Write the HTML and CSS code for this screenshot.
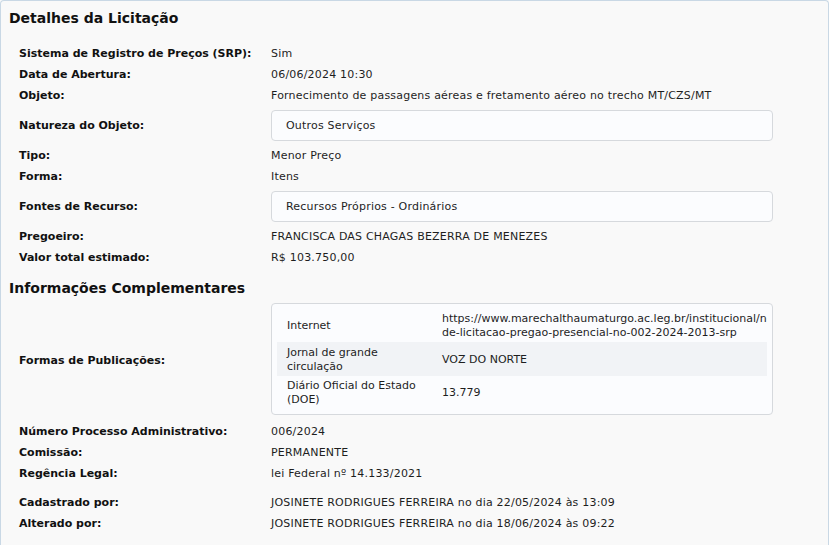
FILE: index.html
```html
<!DOCTYPE html>
<html lang="pt-BR">
<head>
	<meta charset="UTF-8">
	<meta name="viewport" content="width=device-width, initial-scale=1.0">
	<title>Detalhes da Licitação</title>
	<link rel="stylesheet" href="styles.css">
</head>
<body>

	<div class="panel">
		<h3 class="sectionTitle first">Detalhes da Licitação</h3>

		<div class="fields">
			<div class="field"><span class="label">Sistema de Registro de Preços (SRP):</span><span class="value">Sim</span></div>
			<div class="field"><span class="label">Data de Abertura:</span><span class="value">06/06/2024 10:30</span></div>
			<div class="field"><span class="label">Objeto:</span><span class="value">Fornecimento de passagens aéreas e fretamento aéreo no trecho MT/CZS/MT</span></div>
			<div class="field"><span class="label">Natureza do Objeto:</span><div class="value"><div class="box">Outros Serviços</div></div></div>
			<div class="field"><span class="label">Tipo:</span><span class="value">Menor Preço</span></div>
			<div class="field"><span class="label">Forma:</span><span class="value">Itens</span></div>
			<div class="field"><span class="label">Fontes de Recurso:</span><div class="value"><div class="box">Recursos Próprios - Ordinários</div></div></div>
			<div class="field"><span class="label">Pregoeiro:</span><span class="value">FRANCISCA DAS CHAGAS BEZERRA DE MENEZES</span></div>
			<div class="field"><span class="label">Valor total estimado:</span><span class="value">R$ 103.750,00</span></div>
		</div>

		<h3 class="sectionTitle">Informações Complementares</h3>

		<div class="fields">
			<div class="field">
				<span class="label">Formas de Publicações:</span>
				<div class="value">
					<div class="box pubBox">
						<div class="pubWrap">
							<table class="pubTable">
								<colgroup><col class="pubName"><col></colgroup>
								<tr>
									<td>Internet</td>
									<td>https://www.marechalthaumaturgo.ac.leg.br/institucional/noticias/aviso-de-licitacao-pregao-presencial-no-002-2024-2013-srp</td>
								</tr>
								<tr class="striped">
									<td>Jornal de grande circulação</td>
									<td>VOZ DO NORTE</td>
								</tr>
								<tr>
									<td>Diário Oficial do Estado (DOE)</td>
									<td>13.779</td>
								</tr>
							</table>
						</div>
					</div>
				</div>
			</div>
			<div class="field"><span class="label">Número Processo Administrativo:</span><span class="value">006/2024</span></div>
			<div class="field"><span class="label">Comissão:</span><span class="value">PERMANENTE</span></div>
			<div class="field"><span class="label">Regência Legal:</span><span class="value">lei Federal nº 14.133/2021</span></div>
		</div>

		<div class="fields audit">
			<div class="field"><span class="label">Cadastrado por:</span><span class="value">JOSINETE RODRIGUES FERREIRA no dia 22/05/2024 às 13:09</span></div>
			<div class="field"><span class="label">Alterado por:</span><span class="value">JOSINETE RODRIGUES FERREIRA no dia 18/06/2024 às 09:22</span></div>
		</div>
	</div>

</body>
</html>
```

FILE: styles.css
```css
body{
	margin: 0;
	background: #f9f9f9;
	font-family: "DejaVu Sans", Verdana, sans-serif;
	font-size: 11px;
	color: #1e1e1e;
}
.panel{
	border: 1px solid #c9d8e5;
	border-bottom: none;
	border-radius: 4px 4px 0 0;
	background: #f9f9f9;
	padding: 7px 8px 30px;
}
.sectionTitle{
	margin: 10px 0 1px;
	font-size: 14px;
	line-height: 20px;
	font-weight: bold;
	color: #111;
}
.sectionTitle.first{
	margin: 0 0 15px;
}
.fields{
	padding-left: 10px;
}
.field{
	display: grid;
	grid-template-columns: 252px 502px;
	align-items: center;
	min-height: 21px;
}
.label{
	font-weight: bold;
	color: #111;
}
.value{
	white-space: nowrap;
	letter-spacing: .2px;
}
.box{
	margin: 4px 0;
	border: 1px solid #d6d9dd;
	border-radius: 4px;
	background: #fbfcfe;
	line-height: 29px;
	padding: 0 14px;
}
.pubBox{
	padding: 5px;
	line-height: normal;
	margin: 4px 0 6px;
}
.pubWrap{
	overflow: hidden;
}
.pubTable{
	width: 100%;
	table-layout: fixed;
	border-collapse: collapse;
	white-space: normal;
	letter-spacing: 0;
}
.pubName{
	width: 155px;
}
.pubTable td{
	padding: 3px 10px 2px;
	line-height: 14px;
	height: 28px;
	vertical-align: middle;
}
.pubTable tr.striped td{
	background: #f1f3f6;
	height: 29px;
}
.audit{
	margin-top: 8px;
}
```
